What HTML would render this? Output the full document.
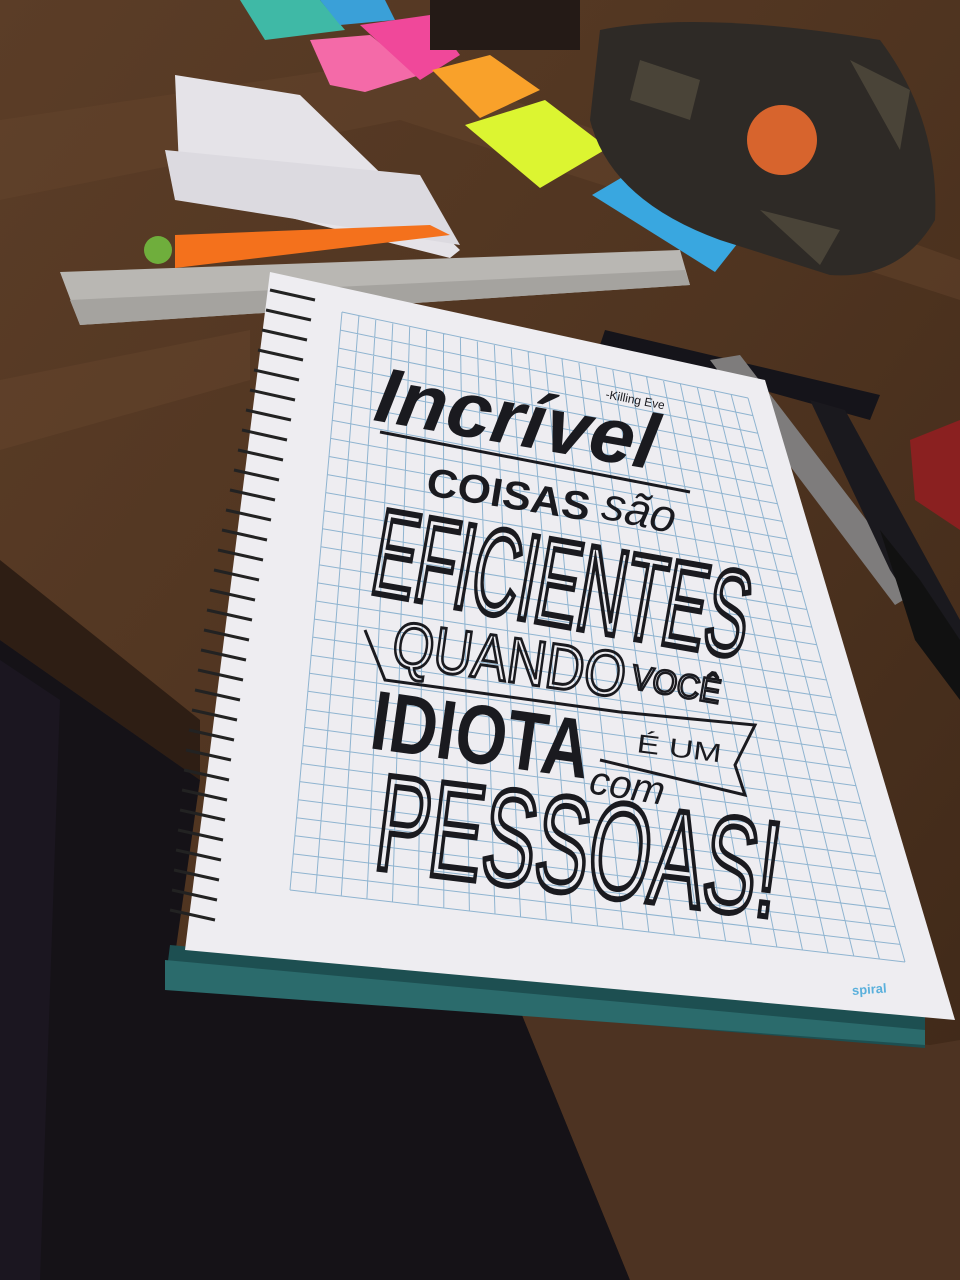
<!DOCTYPE html>
<html><head><meta charset="utf-8"><style>
html,body{margin:0;padding:0;width:960px;height:1280px;overflow:hidden;background:#4a3020}
svg{display:block}
text{font-family:"Liberation Sans",sans-serif}
</style></head><body>
<svg width="960" height="1280" viewBox="0 0 960 1280">
<defs>
<linearGradient id="wood" x1="0" y1="0" x2="1" y2="1">
<stop offset="0" stop-color="#5b3d27"/><stop offset="0.5" stop-color="#4f3420"/><stop offset="1" stop-color="#3e2818"/>
</linearGradient>
</defs>
<rect width="960" height="1280" fill="url(#wood)"/>
<path d="M0 120 L400 60 L960 260 L960 300 L400 120 L0 200Z" fill="#64442c" opacity="0.5"/>
<path d="M0 380 L250 330 L250 380 L0 450Z" fill="#6a4930" opacity="0.4"/>
<path d="M0 560 L200 720 L200 780 L0 640Z" fill="#2e1e14"/>
<path d="M0 640 L200 780 L170 990 L520 1010 L630 1280 L0 1280Z" fill="#151217"/>
<path d="M0 660 L60 700 L40 1280 L0 1280Z" fill="#1b1620"/>
<path d="M520 1010 L930 1045 L960 1040 L960 1280 L630 1280Z" fill="#4d3322"/>
<polygon points="240,0 320,0 345,30 265,40" fill="#3fb9a6"/>
<polygon points="320,0 385,0 395,20 340,25" fill="#3aa0d8"/>
<polygon points="310,40 370,35 420,75 365,92 330,85" fill="#f46aa8"/>
<polygon points="360,25 430,15 460,55 420,80" fill="#f0489a"/>
<polygon points="432,70 490,55 540,90 480,118" fill="#f9a12a"/>
<polygon points="465,125 545,100 608,148 540,188" fill="#dcf531"/>
<polygon points="592,195 660,155 760,215 715,272" fill="#39a7e0"/>
<polygon points="175,75 300,95 460,250 450,258 180,190" fill="#e5e3e8"/>
<polygon points="165,150 420,175 460,245 175,200" fill="#dcdae0"/>
<path d="M600 30 Q700 10 880 40 Q940 120 935 220 Q900 280 830 275 L720 240 Q610 200 590 120Z" fill="#2e2a26"/>
<circle cx="782" cy="140" r="35" fill="#d7642d"/>
<path d="M640 60 L700 80 L690 120 L630 100Z M760 210 L840 230 L820 265Z M850 60 L910 90 L900 150Z" fill="#4a4438"/>
<rect x="430" y="0" width="150" height="50" fill="#241a16"/>
<polygon points="60,272 680,250 690,285 80,325" fill="#b9b7b3"/>
<polygon points="70,300 685,270 690,285 80,325" fill="#a5a39f"/>
<polygon points="175,235 430,225 450,235 175,268" fill="#f4711c"/>
<circle cx="158" cy="250" r="14" fill="#6fae3c"/>
<polygon points="605,330 880,395 870,420 600,345" fill="#15141a"/>
<polygon points="710,360 740,355 920,590 895,605" fill="#7e7c7c"/>
<polygon points="810,400 845,410 960,620 960,680 890,570" fill="#1a191e"/>
<polygon points="880,530 920,580 960,640 960,700 915,640" fill="#111"/>
<polygon points="910,440 960,420 960,530 915,500" fill="#8a2020"/>
<polygon points="170,945 925,1015 925,1048 165,985" fill="#1d4f51"/>
<polygon points="165,960 925,1030 925,1045 165,990" fill="#2b6b6c"/>
<polygon points="270,272 765,380 955,1020 185,950" fill="#eeedf1"/>
<g id="grid" stroke="#8fb4d0" stroke-width="1" fill="none"></g>
<script>
(function(){
var TL=[342,312],TR=[748,398],BR=[905,962],BL=[290,890];
function lerp(a,b,t){return [a[0]+(b[0]-a[0])*t,a[1]+(b[1]-a[1])*t];}
var d="",NH=32,NV=24,i;
for(i=0;i<=NH;i++){var t=i/NH,a=lerp(TL,BL,t),b=lerp(TR,BR,t);d+="M"+a[0].toFixed(1)+" "+a[1].toFixed(1)+"L"+b[0].toFixed(1)+" "+b[1].toFixed(1);}
for(i=0;i<=NV;i++){var s=i/NV,c=lerp(TL,TR,s),e=lerp(BL,BR,s);d+="M"+c[0].toFixed(1)+" "+c[1].toFixed(1)+"L"+e[0].toFixed(1)+" "+e[1].toFixed(1);}
var p=document.createElementNS("http://www.w3.org/2000/svg","path");p.setAttribute("d",d);document.getElementById("grid").appendChild(p);
})();
</script>
<g stroke="#222" stroke-width="3" fill="none">
<path d="M270 290 l45 10 M266 310 l45 10 M262 330 l45 10 M258 350 l45 10 M254 370 l45 10 M250 390 l45 10 M246 410 l45 10 M242 430 l45 10 M238 450 l45 10 M234 470 l45 10 M230 490 l45 10 M226 510 l45 10 M222 530 l45 10 M218 550 l45 10 M214 570 l45 10 M210 590 l45 10 M207 610 l45 10 M204 630 l45 10 M201 650 l45 10 M198 670 l45 10 M195 690 l45 10 M192 710 l45 10 M189 730 l45 10 M186 750 l45 10 M184 770 l45 10 M182 790 l45 10 M180 810 l45 10 M178 830 l45 10 M176 850 l45 10 M174 870 l45 10 M172 890 l45 10 M170 910 l45 10"/>
</g>
<g fill="#1a1a1f">
<text transform="translate(372,420) rotate(10)" font-family="Liberation Serif,serif" font-style="italic" font-size="78" font-weight="bold" textLength="285" lengthAdjust="spacingAndGlyphs">Incrível</text>
<text transform="translate(605,398) rotate(11)" font-size="12">-Killing Eve</text>
<text transform="translate(425,495) rotate(9)" font-size="40" font-weight="bold" textLength="165" lengthAdjust="spacingAndGlyphs">COISAS</text>
<text transform="translate(600,518) rotate(12)" font-family="Liberation Serif,serif" font-style="italic" font-size="46">são</text>
<line x1="380" y1="432" x2="690" y2="492" stroke="#1a1a1f" stroke-width="3"/>
<text transform="translate(368,592) rotate(10)" font-size="122" textLength="380" lengthAdjust="spacingAndGlyphs" fill="none" stroke="#1a1a1f" stroke-width="6">EFICIENTES</text>
<text transform="translate(390,665) rotate(8)" font-size="64" textLength="235" lengthAdjust="spacingAndGlyphs" fill="none" stroke="#1a1a1f" stroke-width="3">QUANDO</text>
<text transform="translate(630,688) rotate(10)" font-size="34" fill="none" stroke="#1a1a1f" stroke-width="2.5" textLength="90" lengthAdjust="spacingAndGlyphs">VOCÊ</text>
<polyline points="365,630 385,680 620,712 755,725 735,765 745,795 600,760" fill="none" stroke="#1a1a1f" stroke-width="3"/>
<text transform="translate(368,748) rotate(8)" font-size="84" font-weight="bold" textLength="220" lengthAdjust="spacingAndGlyphs">IDIOTA</text>
<text transform="translate(636,752) rotate(7)" font-size="26" textLength="85" lengthAdjust="spacingAndGlyphs">É UM</text>
<text transform="translate(588,793) rotate(9)" font-family="Liberation Serif,serif" font-style="italic" font-size="40">com</text>
<text transform="translate(372,868) rotate(7)" font-size="136" textLength="405" lengthAdjust="spacingAndGlyphs" fill="none" stroke="#1a1a1f" stroke-width="6">PESSOAS!</text>
</g>
<text x="852" y="993" font-size="13" font-weight="bold" fill="#5ab0dc" transform="rotate(-4 880 990)">spiral</text>
</svg>
</body></html>
